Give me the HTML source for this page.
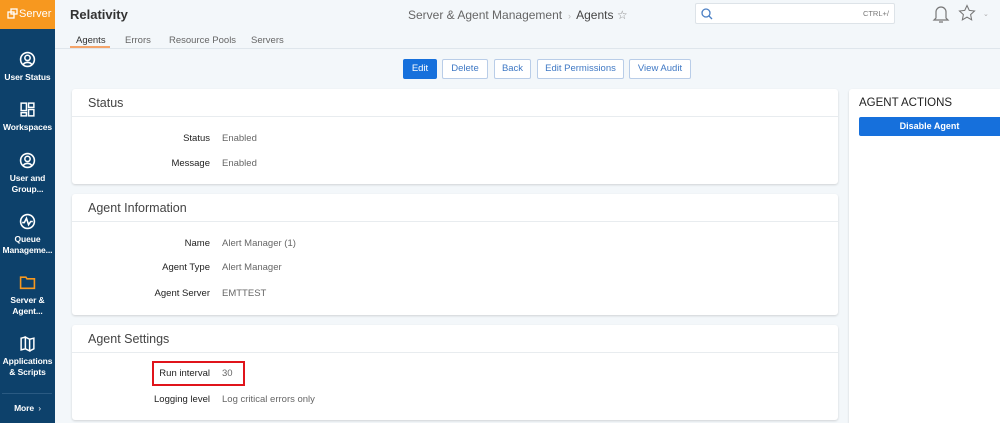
<!DOCTYPE html>
<html><head><style>
*{box-sizing:border-box;margin:0;padding:0}
body{width:1000px;height:423px;overflow:hidden;background:#f3f7fa;font-family:"Liberation Sans",sans-serif;position:relative}
.side{position:absolute;left:0;top:0;width:55px;height:423px;background:#0d416b}
.logo{position:absolute;left:0;top:0;width:55px;height:29px;background:#f7981f;color:#fff;font-size:11px;line-height:29px;padding-left:19px}
.nav{position:absolute;left:0;width:55px;text-align:center;color:#fff;font-size:8.5px;font-weight:bold;line-height:10.5px;letter-spacing:-0.1px}
.nav svg{display:block;margin:0 auto 4px}
.abs{position:absolute}
.panel{position:absolute;left:72px;width:766px;background:#fff;border-radius:3px;box-shadow:0 1px 2px rgba(0,0,0,.15)}
.ph{height:28px;border-bottom:1px solid #e8ecef;font-size:12.5px;color:#444;line-height:28px;padding-left:16px}
.row{position:absolute;font-size:9.5px}
.lab{position:absolute;right:628px;color:#222;white-space:nowrap}
.val{position:absolute;left:150px;color:#666;white-space:nowrap}
.btn{position:absolute;top:59px;height:20px;border:1px solid #b9cde8;background:#fff;color:#3f78c4;font-size:9.5px;line-height:18px;text-align:center;border-radius:2px}
</style></head><body>
<div class="side">
<div class="logo"><svg class="abs" style="left:7px;top:8px" width="11" height="11" viewBox="0 0 11 11" fill="none" stroke="#fff" stroke-width="1.3"><rect x="4" y="1" width="6" height="5"/><rect x="1" y="4" width="6" height="6"/></svg>Server</div>
<div class="nav" style="top:51px"><svg width="17" height="17" viewBox="0 0 16 16" fill="none" stroke="#fff" stroke-width="1.5"><circle cx="8" cy="8" r="6.5"/><circle cx="8" cy="6.5" r="2.5"/><path d="M4 13c1-3 7-3 8 0"/></svg>User Status</div>
<div class="nav" style="top:101px"><svg width="17" height="17" viewBox="0 0 16 16" fill="none" stroke="#fff" stroke-width="1.4"><rect x="2" y="2" width="5" height="7"/><rect x="9" y="2" width="5" height="4"/><rect x="9" y="8" width="5" height="6"/><rect x="2" y="11" width="5" height="3"/></svg>Workspaces</div>
<div class="nav" style="top:152px"><svg width="17" height="17" viewBox="0 0 16 16" fill="none" stroke="#fff" stroke-width="1.5"><circle cx="8" cy="8" r="6.5"/><circle cx="8" cy="6.5" r="2.5"/><path d="M4 13c1-3 7-3 8 0"/></svg>User and<br>Group...</div>
<div class="nav" style="top:213px"><svg width="17" height="17" viewBox="0 0 16 16" fill="none" stroke="#fff" stroke-width="1.5"><circle cx="8" cy="8" r="6.5"/><path d="M3 9h2l2-4 2 6 2-3h2"/></svg>Queue<br>Manageme...</div>
<div class="nav" style="top:274px"><svg width="17" height="17" viewBox="0 0 16 16" fill="none" stroke="#f7981f" stroke-width="1.5"><path d="M1.5 3h5l1 1.5h7v9h-13z"/></svg>Server &amp;<br>Agent...</div>
<div class="nav" style="top:335px"><svg width="17" height="17" viewBox="0 0 16 16" fill="none" stroke="#fff" stroke-width="1.4"><path d="M2 3l4 -1v11l-4 1z M6 2l4 2v11l-4-2z M10 4l4-1v10l-4 2"/></svg>Applications<br>&amp; Scripts</div>
<div class="abs" style="left:2px;top:393px;width:50px;border-top:1px solid #2a5a82"></div>
<div class="nav" style="top:403px">More <span style="font-weight:normal;font-size:8px">&nbsp;›</span></div>
</div>
<div class="abs" style="left:70px;top:7px;font-size:13px;font-weight:bold;color:#333">Relativity</div>
<div class="abs" style="left:408px;top:8px;font-size:12px;color:#666">Server &amp; Agent Management <span style="color:#bbb;font-size:9px">&nbsp;›&nbsp;</span> <span style="color:#444">Agents</span> <span style="color:#888">☆</span></div>
<div class="abs" style="left:695px;top:3px;width:200px;height:21px;background:#fff;border:1px solid #dde3e8;border-radius:2px"><svg class="abs" style="left:5px;top:4px" width="12" height="12" viewBox="0 0 12 12" fill="none" stroke="#4a7fc4" stroke-width="1.3"><circle cx="5" cy="5" r="4"/><path d="M8 8l3 3"/></svg><span class="abs" style="right:5px;top:5px;font-size:7.5px;color:#777">CTRL+/</span></div>
<svg class="abs" style="left:932px;top:4px" width="18" height="20" viewBox="0 0 18 20" fill="none" stroke="#777" stroke-width="1.2"><path d="M4 14V8a5 5 0 0 1 10 0v6l2 2H2z M7 18h4"/></svg>
<svg class="abs" style="left:958px;top:4px" width="18" height="18" viewBox="0 0 24 24" fill="none" stroke="#777" stroke-width="1.4"><path d="M12 2l3 6.5 7 .8-5.2 4.8 1.4 7-6.2-3.6-6.2 3.6 1.4-7L2 9.3l7-.8z"/></svg>
<span class="abs" style="left:983px;top:10px;font-size:7px;color:#aaa">⌄</span>
<div class="abs" style="left:76px;top:35px;font-size:9.5px;color:#333">Agents</div>
<div class="abs" style="left:70px;top:46px;width:40px;height:2px;background:#f4a46a"></div>
<div class="abs" style="left:125px;top:35px;font-size:9.5px;color:#666">Errors</div>
<div class="abs" style="left:169px;top:35px;font-size:9.5px;color:#666">Resource Pools</div>
<div class="abs" style="left:251px;top:35px;font-size:9.5px;color:#666">Servers</div>
<div class="abs" style="left:55px;top:48px;width:945px;border-top:1px solid #dfe6ec"></div>
<div class="btn" style="left:403px;width:34px;background:#1670dc;border-color:#1670dc;color:#fff">Edit</div>
<div class="btn" style="left:442px;width:46px">Delete</div>
<div class="btn" style="left:494px;width:37px">Back</div>
<div class="btn" style="left:537px;width:87px">Edit Permissions</div>
<div class="btn" style="left:629px;width:62px">View Audit</div>
<div class="panel" style="top:89px;height:95px"><div class="ph">Status</div>
<div class="row" style="top:44px;left:0;width:766px"><span class="lab">Status</span><span class="val">Enabled</span></div>
<div class="row" style="top:69px;left:0;width:766px"><span class="lab">Message</span><span class="val">Enabled</span></div></div>
<div class="panel" style="top:194px;height:121px"><div class="ph">Agent Information</div>
<div class="row" style="top:44px;left:0;width:766px"><span class="lab">Name</span><span class="val">Alert Manager (1)</span></div>
<div class="row" style="top:68px;left:0;width:766px"><span class="lab">Agent Type</span><span class="val">Alert Manager</span></div>
<div class="row" style="top:94px;left:0;width:766px"><span class="lab">Agent Server</span><span class="val">EMTTEST</span></div></div>
<div class="panel" style="top:325px;height:95px"><div class="ph">Agent Settings</div>
<div class="row" style="top:43px;left:0;width:766px"><span class="lab">Run interval</span><span class="val">30</span></div>
<div class="row" style="top:69px;left:0;width:766px"><span class="lab">Logging level</span><span class="val">Log critical errors only</span></div></div>
<div class="abs" style="left:152px;top:361px;width:93px;height:25px;border:2px solid #e0141b"></div>
<div class="abs" style="left:849px;top:89px;width:151px;height:334px;background:#fff;border-radius:3px 0 0 0;box-shadow:0 1px 2px rgba(0,0,0,.15)">
<div class="abs" style="left:10px;top:8px;font-size:11.5px;color:#222">AGENT ACTIONS</div>
<div class="abs" style="left:10px;top:28px;width:141px;height:19px;background:#1670dc;color:#fff;font-size:9px;font-weight:bold;line-height:19px;text-align:center;border-radius:2px 0 0 2px">Disable Agent</div></div>
</body></html>
